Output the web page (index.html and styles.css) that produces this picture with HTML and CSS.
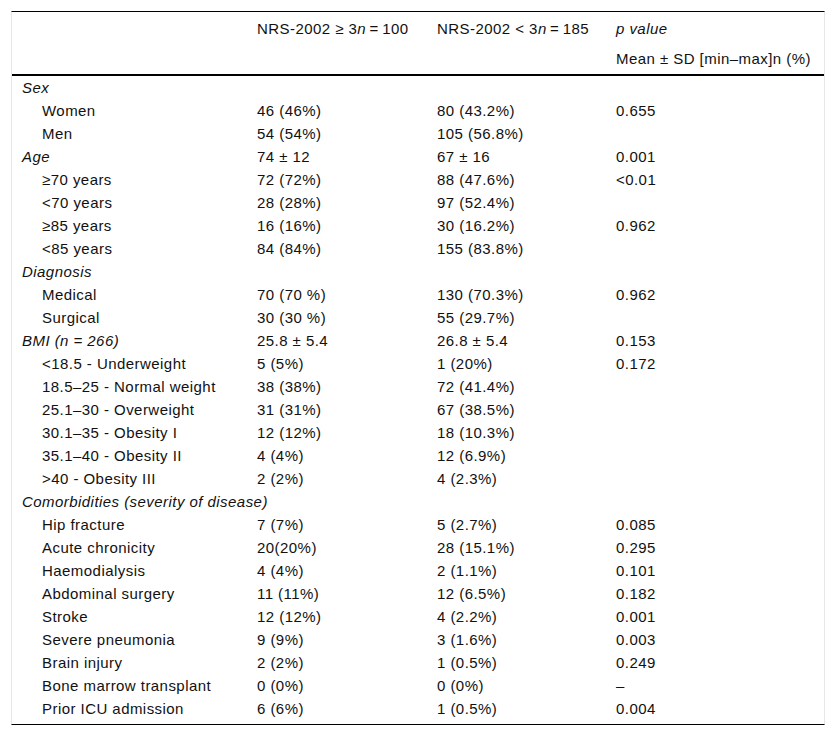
FILE: index.html
```html
<!DOCTYPE html>
<html lang="en">
<head>
<meta charset="utf-8">
<title>Table</title>
<link rel="stylesheet" href="styles.css">
</head>
<body>
<div class="wrap">
<table class="tbl">
<colgroup>
<col class="c1"><col class="c2"><col class="c3"><col class="c4">
</colgroup>
<thead>
<tr class="h1"><th></th><th>NRS-2002 ≥ 3<i>n</i>&#8201;=&#8201;100</th><th>NRS-2002 &lt; 3<i>n</i>&#8201;=&#8201;185</th><th><i>p value</i></th></tr>
<tr class="h2"><th></th><th></th><th></th><th>Mean ± SD [min–max]n (%)</th></tr>
</thead>
<tbody>
<tr><td class="grp" colspan="4">Sex</td></tr>
<tr><td class="ind">Women</td><td>46 (46%)</td><td>80 (43.2%)</td><td>0.655</td></tr>
<tr><td class="ind">Men</td><td>54 (54%)</td><td>105 (56.8%)</td><td></td></tr>
<tr><td class="grp">Age</td><td>74 ± 12</td><td>67 ± 16</td><td>0.001</td></tr>
<tr><td class="ind">≥70 years</td><td>72 (72%)</td><td>88 (47.6%)</td><td>&lt;0.01</td></tr>
<tr><td class="ind">&lt;70 years</td><td>28 (28%)</td><td>97 (52.4%)</td><td></td></tr>
<tr><td class="ind">≥85 years</td><td>16 (16%)</td><td>30 (16.2%)</td><td>0.962</td></tr>
<tr><td class="ind">&lt;85 years</td><td>84 (84%)</td><td>155 (83.8%)</td><td></td></tr>
<tr><td class="grp" colspan="4">Diagnosis</td></tr>
<tr><td class="ind">Medical</td><td>70 (70 %)</td><td>130 (70.3%)</td><td>0.962</td></tr>
<tr><td class="ind">Surgical</td><td>30 (30 %)</td><td>55 (29.7%)</td><td></td></tr>
<tr><td class="grp">BMI (n = 266)</td><td>25.8 ± 5.4</td><td>26.8 ± 5.4</td><td>0.153</td></tr>
<tr><td class="ind">&lt;18.5 - Underweight</td><td>5 (5%)</td><td>1 (20%)</td><td>0.172</td></tr>
<tr><td class="ind">18.5–25 - Normal weight</td><td>38 (38%)</td><td>72 (41.4%)</td><td></td></tr>
<tr><td class="ind">25.1–30 - Overweight</td><td>31 (31%)</td><td>67 (38.5%)</td><td></td></tr>
<tr><td class="ind">30.1–35 - Obesity I</td><td>12 (12%)</td><td>18 (10.3%)</td><td></td></tr>
<tr><td class="ind">35.1–40 - Obesity II</td><td>4 (4%)</td><td>12 (6.9%)</td><td></td></tr>
<tr><td class="ind">&gt;40 - Obesity III</td><td>2 (2%)</td><td>4 (2.3%)</td><td></td></tr>
<tr><td class="grp" colspan="4">Comorbidities (severity of disease)</td></tr>
<tr><td class="ind">Hip fracture</td><td>7 (7%)</td><td>5 (2.7%)</td><td>0.085</td></tr>
<tr><td class="ind">Acute chronicity</td><td>20(20%)</td><td>28 (15.1%)</td><td>0.295</td></tr>
<tr><td class="ind">Haemodialysis</td><td>4 (4%)</td><td>2 (1.1%)</td><td>0.101</td></tr>
<tr><td class="ind">Abdominal surgery</td><td>11 (11%)</td><td>12 (6.5%)</td><td>0.182</td></tr>
<tr><td class="ind">Stroke</td><td>12 (12%)</td><td>4 (2.2%)</td><td>0.001</td></tr>
<tr><td class="ind">Severe pneumonia</td><td>9 (9%)</td><td>3 (1.6%)</td><td>0.003</td></tr>
<tr><td class="ind">Brain injury</td><td>2 (2%)</td><td>1 (0.5%)</td><td>0.249</td></tr>
<tr><td class="ind">Bone marrow transplant</td><td>0 (0%)</td><td>0 (0%)</td><td>–</td></tr>
<tr><td class="ind">Prior ICU admission</td><td>6 (6%)</td><td>1 (0.5%)</td><td>0.004</td></tr>
</tbody>
</table>
</div>
</body>
</html>
```

FILE: styles.css
```css
html, body {
  margin: 0;
  padding: 0;
  background: #fff;
}
body {
  padding: 11px 10px 0 11px;
  font-family: "Liberation Sans", Arial, sans-serif;
  font-size: 15px;
  letter-spacing: 0.45px;
  color: #111;
}
.wrap {
  width: 814px;
  box-sizing: border-box;
  border-top: 1px solid #000;
  border-bottom: 1px solid #000;
  border-left: 1px solid #e6e6e6;
  border-right: 1px solid #e6e6e6;
  padding-bottom: 4px;
}
.tbl {
  width: 100%;
  border-collapse: collapse;
  table-layout: fixed;
}
.c1 { width: 235px; }
.c2 { width: 180px; }
.c3 { width: 179px; }
.c4 { width: auto; }
.tbl th, .tbl td {
  text-align: left;
  font-weight: normal;
  padding: 0 0 0 10px;
  line-height: 23px;
  white-space: nowrap;
  vertical-align: middle;
}
.h1 th {
  padding-top: 5px;
  padding-bottom: 3px;
}
.h2 th {
  padding-top: 4px;
  padding-bottom: 4px;
}
.h2 {
  border-bottom: 2px solid #000;
}
.grp {
  font-style: italic;
}
.tbl td.ind {
  padding-left: 30px;
}
```
